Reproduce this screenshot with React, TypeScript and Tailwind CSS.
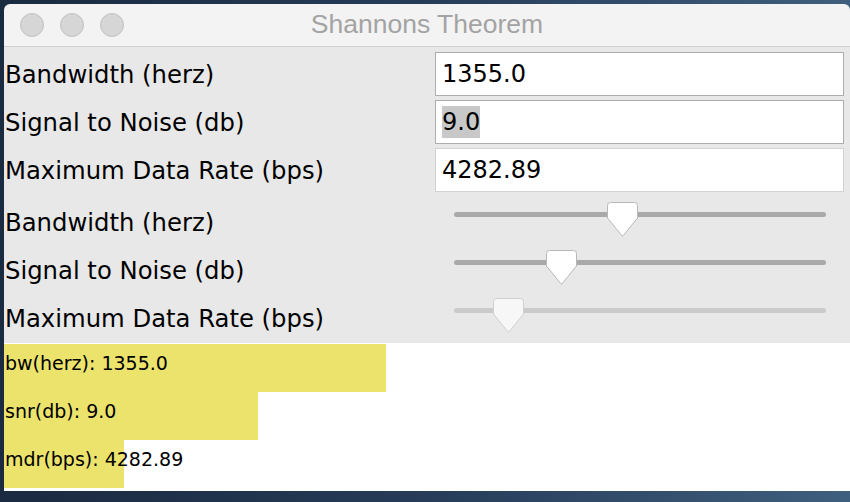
import React from "react";

const labelFont = { fontFamily: '"DejaVu Sans", "Liberation Sans", sans-serif' };

function Thumb({ left, disabled }: { left: number; disabled?: boolean }) {
  return (
    <svg
      className="absolute top-[5px]"
      style={{ left }}
      width="32"
      height="36"
      viewBox="0 0 32 36"
    >
      <path
        d="M3.5,0.5 H27.5 Q30.5,0.5 30.5,3.5 V16 L15.5,34.5 L0.5,16 V3.5 Q0.5,0.5 3.5,0.5 Z"
        fill={disabled ? "#f7f7f7" : "#ffffff"}
        stroke={disabled ? "#cfcfcf" : "#b8b8b8"}
        strokeWidth="1"
      />
    </svg>
  );
}

function SliderRow({ label, thumb, disabled }: { label: string; thumb: number; disabled?: boolean }) {
  return (
    <div className="flex h-[48px]">
      <div className="w-[431px] flex items-center pl-[1px] pt-[4px] text-[24.3px] text-black whitespace-nowrap" style={labelFont}>
        {label}
      </div>
      <div className="relative w-[409px] h-full">
        <div
          className={
            "absolute left-[19px] top-[15px] w-[372px] h-[5px] rounded-full " +
            (disabled ? "bg-[#cacaca]" : "bg-[#a9a9a9]")
          }
        />
        <Thumb left={thumb} disabled={disabled} />
      </div>
    </div>
  );
}

function FieldRow({ label, value, selected, light }: { label: string; value: string; selected?: boolean; light?: boolean }) {
  return (
    <div className="flex h-[44px]">
      <div className="w-[431px] flex items-center pl-[1px] pt-[2px] text-[24.3px] text-black whitespace-nowrap" style={labelFont}>
        {label}
      </div>
      <div
        className={
          "w-[409px] h-full bg-white border flex items-center pl-[6px] text-[24px] text-black " +
          (light ? "border-[#d2d2d2]" : "border-[#adadad]")
        }
        style={labelFont}
      >
        {selected ? (
          <span className="bg-[#c8c8c8] leading-[32px] inline-block">{value}</span>
        ) : (
          <span>{value}</span>
        )}
      </div>
    </div>
  );
}

function Bar({ text, width }: { text: string; width: number }) {
  return (
    <div className="h-[48px] relative">
      <div className="h-full bg-[#ebe36c]" style={{ width }} />
      <div
        className="absolute inset-0 flex items-center pb-[10px] pl-[1px] text-[19px] text-black whitespace-nowrap"
        style={labelFont}
      >
        {text}
      </div>
    </div>
  );
}

export default function App() {
  return (
    <div className="w-[850px] h-[502px] overflow-hidden bg-gradient-to-r from-[#1a2a40] via-[#263c58] to-[#3f5f7e] pt-[4px] pl-[4px]">
      <div className="w-[846px] h-[487px] rounded-t-[6px] overflow-hidden flex flex-col">
        {/* title bar */}
        <div className="h-[43px] bg-[#f3f3f3] border-b border-[#d0d0d0] relative flex items-center pl-[16px] gap-[16px]">
          <div className="w-[24px] h-[24px] rounded-full bg-[#d6d6d6] border border-[#c3c3c3]" />
          <div className="w-[24px] h-[24px] rounded-full bg-[#d6d6d6] border border-[#c3c3c3]" />
          <div className="w-[24px] h-[24px] rounded-full bg-[#d6d6d6] border border-[#c3c3c3]" />
          <div
            className="absolute inset-0 flex items-center justify-center text-[26.5px] text-[#a3a3a3] pb-[1px]"
            style={{ fontFamily: '"Liberation Sans", Arial, sans-serif' }}
          >
            Shannons Theorem
          </div>
        </div>
        {/* grey content */}
        <div className="h-[296px] bg-[#e8e8e8] pt-[5px] flex flex-col">
          <div className="flex flex-col gap-[4px]">
            <FieldRow label="Bandwidth (herz)" value="1355.0" />
            <FieldRow label="Signal to Noise (db)" value="9.0" selected />
            <FieldRow label="Maximum Data Rate (bps)" value="4282.89" light />
          </div>
          <div className="mt-[5px] flex flex-col">
            <SliderRow label="Bandwidth (herz)" thumb={172} />
            <SliderRow label="Signal to Noise (db)" thumb={111} />
            <SliderRow label="Maximum Data Rate (bps)" thumb={58} disabled />
          </div>
        </div>
        {/* chart */}
        <div className="flex-1 bg-white pt-[1px] flex flex-col">
          <Bar text="bw(herz): 1355.0" width={382} />
          <Bar text="snr(db): 9.0" width={254} />
          <Bar text="mdr(bps): 4282.89" width={120} />
        </div>
      </div>
    </div>
  );
}
